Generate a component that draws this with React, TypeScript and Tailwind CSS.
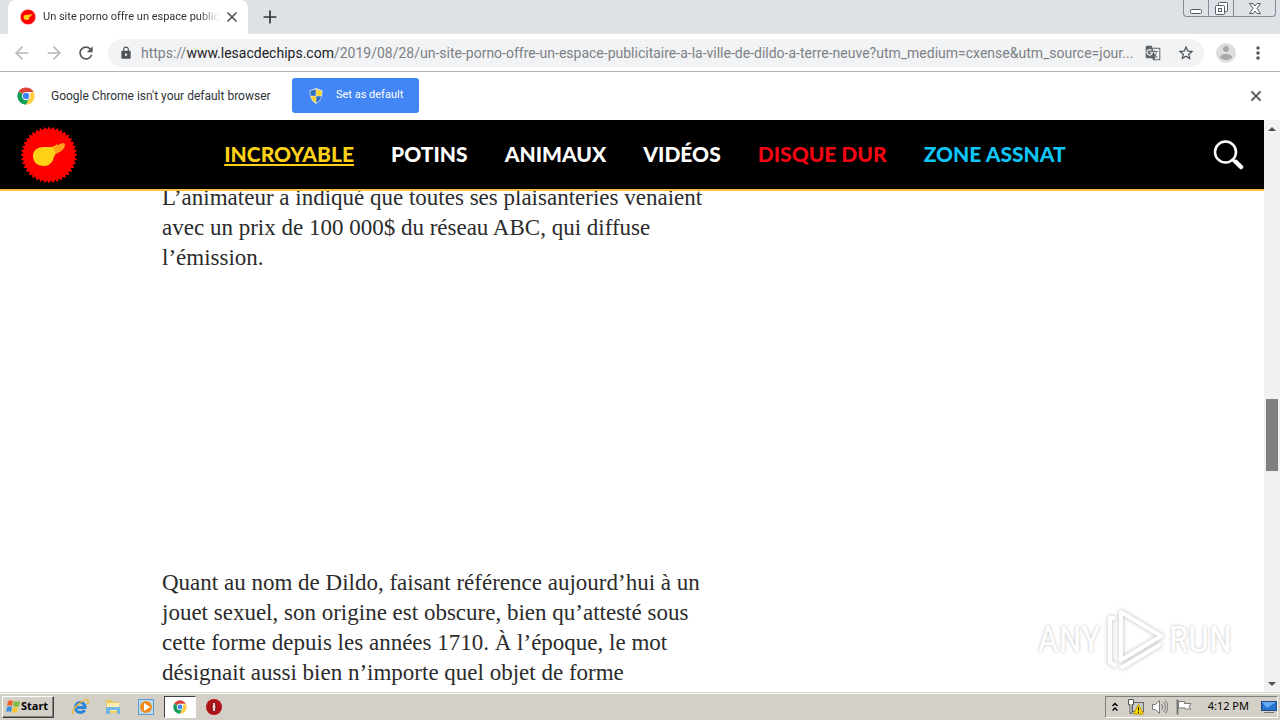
import { ArrowLeft, ArrowRight, Plus, X } from 'lucide-react';
import { MdGTranslate, MdLock, MdMoreVert, MdRefresh, MdStarBorder } from 'react-icons/md';

const NAV_ITEMS = [
    { label: 'INCROYABLE', className: 'text-[#fdd116] underline decoration-2 underline-offset-2' },
    { label: 'POTINS', className: 'text-white' },
    { label: 'ANIMAUX', className: 'text-white' },
    { label: 'VIDÉOS', className: 'text-white' },
    { label: 'DISQUE DUR', className: 'text-[#f50514]' },
    { label: 'ZONE ASSNAT', className: 'text-[#0fc5f7]' },
];

// serrated edge of the badge, 40 teeth
const BADGE_POINTS = Array.from({ length: 80 }, (_, i) => {
    const r = i % 2 ? 25.5 : 28.5;
    const a = (i * Math.PI) / 40;
    return `${(29 + r * Math.cos(a)).toFixed(1)},${(29 + r * Math.sin(a)).toFixed(1)}`;
}).join(' ');

const ChipLogo = ({ className }: { className: string }) => (
    <svg viewBox="0 0 58 58" className={className} aria-hidden="true">
        <polygon points={BADGE_POINTS} fill="#fe0000" />
        <path d="M13 30c0-6 5-9 11-9 5 0 10 1 13-3l1 8c-4 3-4 5-5 8-2 4-5 6-9 6-7 0-11-4-11-10z" fill="#fdd116" />
        <path d="M33 21c4-1 7-4 11-4 3 3-1 8-8 11-1-2-2-4-3-7z" fill="#ffa11a" />
    </svg>
);

const ChromeLogo = ({ className }: { className: string }) => (
    <svg viewBox="0 0 48 48" className={className} aria-hidden="true">
        <path d="M24 24L4.1 12.5A23 23 0 0 1 43.9 12.5L44 13H24z" fill="#db4437" />
        <path d="M24 24L4.1 12.5A23 23 0 0 0 24 47L33.5 29.5z" fill="#0f9d58" />
        <path d="M24 24L43.9 12.5A23 23 0 0 1 24 47L33.5 29.5z" fill="#ffcd40" />
        <circle cx="24" cy="24" r="11" fill="#fff" />
        <circle cx="24" cy="24" r="8.5" fill="#4285f4" />
    </svg>
);

const ShieldIcon = () => (
    <svg viewBox="0 0 16 16" className="w-4 h-4" aria-hidden="true">
        <path d="M8 0l6.5 2.5c0 6-1.5 10.5-6.5 13.5C3 13 1.5 8.5 1.5 2.5z" fill="#dfe6ee" />
        <path d="M7.7 1.3v6.4h-5c-.3-1.5-.4-3-.4-4.6z" fill="#2a6fc0" />
        <path d="M8.3 1.3l5.4 1.8c0 1.6-.1 3.1-.4 4.6h-5z" fill="#f7d22e" />
        <path d="M7.7 8.3v6.6C4.8 13 3.3 11 2.8 8.3z" fill="#f7d22e" />
        <path d="M8.3 8.3v6.6c2.9-1.9 4.4-3.9 4.9-6.6z" fill="#2a6fc0" />
    </svg>
);

function TabStrip() {
    return (
        <div className="flex h-[34px] shrink-0 bg-[#dee1e6] pl-2">
            <div className="flex w-60 items-center rounded-t-lg bg-white pl-3 pr-2">
                <ChipLogo className="w-4 h-4 shrink-0" />
                <span className="ml-[7px] flex-1 overflow-hidden whitespace-nowrap text-[11px] text-[#303338] [mask-image:linear-gradient(to_right,black_88%,transparent)]">
                    Un site porno offre un espace publici
                </span>
                <button aria-label="Close tab" className="ml-1 text-[#505357]"><X className="w-4 h-4" strokeWidth={2.5} /></button>
            </div>
            <button aria-label="New tab" className="ml-3 text-[#303338]"><Plus className="w-5 h-5" /></button>
            <div className="ml-auto mr-1 flex h-[17px] overflow-hidden rounded-b border border-t-0 border-[#858b96] text-[#555b66]">
                <button aria-label="Minimize" className="flex w-[25px] items-end justify-center border-r border-[#858b96] pb-0.5">
                    <svg viewBox="0 0 12 5" className="w-3 h-[5px]"><rect x=".5" y=".5" width="11" height="4" rx="1" fill="#fff" stroke="currentColor" /></svg>
                </button>
                <button aria-label="Restore" className="flex w-[25px] items-center justify-center border-r border-[#858b96]">
                    <svg viewBox="0 0 13 13" className="w-[13px] h-[13px]" fill="#fff" stroke="currentColor">
                        <rect x="3.5" y=".5" width="9" height="9" rx="1" />
                        <rect x=".5" y="3.5" width="9" height="9" rx="1" />
                        <rect x="3.5" y="6.5" width="3" height="3" />
                    </svg>
                </button>
                <button aria-label="Close" className="flex w-[41px] items-center justify-center">
                    <svg viewBox="0 0 12 11" className="w-3 h-[11px]" fill="#fff" stroke="currentColor">
                        <path d="M.5.5H4L6 3l2-2.5h3.5L8 5.500l3.500 5H8L6 8l-2 2.500H.5L4 5.500z" />
                    </svg>
                </button>
            </div>
        </div>
    );
}

function Toolbar() {
    return (
        <div className="flex h-[38px] shrink-0 items-center border-b border-[#b1b3b1] bg-white px-3">
            <button aria-label="Back" className="text-[#b5b7ba]"><ArrowLeft className="w-5 h-5" /></button>
            <button aria-label="Forward" className="ml-3 text-[#b5b7ba]"><ArrowRight className="w-5 h-5" /></button>
            <button aria-label="Reload" className="ml-3 text-[#54575b]"><MdRefresh className="w-5 h-5" /></button>
            <div className="ml-3 flex h-7 min-w-0 flex-1 items-center rounded-full bg-[#f1f3f4] pl-[11px] pr-[9px] text-sm text-[#7d8186]">
                <MdLock className="w-[14px] h-[14px] shrink-0 text-[#505357]" />
                <label htmlFor="address" className="ml-2 whitespace-nowrap">
                    https://<span className="text-[#202124]">www.lesacdechips.com</span>
                </label>
                <input
                    id="address"
                    type="text"
                    className="min-w-0 flex-1 bg-transparent text-ellipsis outline-none"
                    defaultValue="/2019/08/28/un-site-porno-offre-un-espace-publicitaire-a-la-ville-de-dildo-a-terre-neuve?utm_medium=cxense&utm_source=jour..."
                />
                <button aria-label="Translate this page" className="ml-2 text-[#5f6368]"><MdGTranslate className="w-4 h-4" /></button>
                <button aria-label="Bookmark this page" className="ml-4 text-[#4a4d51]"><MdStarBorder className="w-[18px] h-[18px]" /></button>
            </div>
            <button aria-label="Profile" className="ml-3">
                <svg viewBox="0 0 20 20" className="w-5 h-5">
                    <circle cx="10" cy="10" r="10" fill="#dedede" />
                    <circle cx="10" cy="6" r="3" fill="#a9a9a9" />
                    <ellipse cx="10" cy="14" rx="6" ry="3" fill="#a9a9a9" />
                </svg>
            </button>
            <button aria-label="Menu" className="ml-3 text-[#505357]"><MdMoreVert className="w-5 h-5" /></button>
        </div>
    );
}

function DefaultBrowserBar() {
    return (
        <div className="flex h-12 shrink-0 items-center bg-white pb-px pl-[17px] pr-4 text-xs text-[#303338]">
            <ChromeLogo className="w-[18px] h-[18px]" />
            <span className="ml-4 w-[229px] whitespace-nowrap">Google Chrome isn't your default browser</span>
            <button className="ml-3 flex h-[35px] w-[127px] items-center gap-3 rounded-[3px] bg-[#4285f4] pl-4 text-[11px] whitespace-nowrap text-white">
                <ShieldIcon />
                Set as default
            </button>
            <button aria-label="Dismiss" className="ml-auto text-[#5f6368]"><X className="w-4 h-4" strokeWidth={3} /></button>
        </div>
    );
}

function SiteHeader() {
    return (
        <header className="flex h-[71px] shrink-0 items-center border-b-2 border-[#f9bf3b] bg-black px-5">
            <a href="#" aria-label="Accueil"><ChipLogo className="w-[58px] h-[58px]" /></a>
            <nav className="flex flex-1 justify-center gap-[37px] pb-0.5 font-['Lato',sans-serif] text-[21px] font-black whitespace-nowrap">
                {NAV_ITEMS.map(item => <a key={item.label} href="#" className={item.className}>{item.label}</a>)}
            </nav>
            <button aria-label="Rechercher" className="text-white">
                <svg viewBox="0 0 32 32" className="w-8 h-8" fill="none" stroke="currentColor">
                    <circle cx="13.5" cy="13" r="10.5" strokeWidth="2.5" />
                    <path d="M21 21l3 3" strokeWidth="3" />
                    <path d="M24 23l5 5" strokeWidth="4.5" strokeLinecap="round" />
                </svg>
            </button>
        </header>
    );
}

function Article() {
    return (
        <article className="-mt-2 ml-[162px] w-[560px] font-['Liberation_Serif',serif] text-[23px] leading-[30px] whitespace-nowrap text-[#2b2b2b]">
            <p>
                L’animateur a indiqué que toutes ses plaisanteries venaient<br />
                avec un prix de 100 000$ du réseau ABC, qui diffuse<br />
                l’émission.
            </p>
            <p className="mt-[295px]">
                Quant au nom de Dildo, faisant référence aujourd’hui à un<br />
                jouet sexuel, son origine est obscure, bien qu’attesté sous<br />
                cette forme depuis les années 1710. À l’époque, le mot<br />
                désignait aussi bien n’importe quel objet de forme
            </p>
        </article>
    );
}

function Scrollbar() {
    return (
        <div className="flex w-4 shrink-0 flex-col items-center bg-[#f1f1f1]">
            <button aria-label="Scroll up" className="flex h-[17px] items-center">
                <svg viewBox="0 0 8 4" className="w-2 h-1"><path d="M0 4l4-4 4 4z" fill="#505050" /></svg>
            </button>
            <div className="flex-[262]" />
            <div className="h-[72px] w-3 bg-[#7f7f7f]" />
            <div className="flex-[204]" />
            <button aria-label="Scroll down" className="flex h-[17px] items-center">
                <svg viewBox="0 0 8 4" className="w-2 h-1"><path d="M0 0h8L4 4z" fill="#505050" /></svg>
            </button>
        </div>
    );
}

function Watermark() {
    return (
        <div className="absolute right-8 bottom-5 flex items-center gap-1 font-['Roboto_Condensed','Roboto',sans-serif] text-[37px] leading-[64px] text-white [text-shadow:0_0_3px_#b8b8b8]">
            <span>ANY</span>
            <svg viewBox="0 0 60 64" className="w-[60px] h-16 drop-shadow-[0_0_2px_#b8b8b8]" fill="none" stroke="#fff" strokeWidth="4" strokeLinejoin="round">
                <path d="M16 4l40 24-40 24z" />
                <path d="M10 10H5v44l6 4" />
                <path d="M16 60l40-24" />
            </svg>
            <span>RUN</span>
        </div>
    );
}

function Taskbar() {
    return (
        <footer className="flex h-7 shrink-0 items-center border-t border-[#d4d0c8] bg-[#d4d0c8] pl-0.5 font-['Noto_Sans',sans-serif] text-[11px] text-black shadow-[inset_0_1px_0_#fff]">
            <button className="flex h-[22px] w-[52px] items-center border border-t-white border-l-white border-r-[#404040] border-b-[#404040] pl-0.5 font-bold shadow-[inset_-1px_-1px_0_#808080]">
                <svg viewBox="0 0 16 16" className="w-4 h-4 shrink-0" aria-hidden="true">
                    <path d="M3 2c2-1 3-1 5 0L7 7C5 6 4 6 2 7z" fill="#f0622d" />
                    <path d="M9 2c2 1 3 1 6 0l-1 5c-2 1-4 1-6 0z" fill="#7cba3b" />
                    <path d="M2 8c2-1 3-1 5 0l-1 5c-2-1-3-1-5 0z" fill="#3a8ee0" />
                    <path d="M8 8c2 1 3 1 5 0l-1 5c-2 1-3 1-5 0z" fill="#fcc52e" />
                </svg>
                Start
            </button>
            <div className="ml-[11px] flex items-center gap-[3px]">
                <button aria-label="Internet Explorer" className="flex w-[30px] justify-center">
                    <svg viewBox="0 0 18 18" className="w-[18px] h-[18px]" fill="none">
                        <path d="M4.5 9.5H14c0-7-9.5-6.500-9.5 0 0 6 7.500 6 9 2.500" stroke="#2a86d8" strokeWidth="3" />
                        <path d="M2 16C-1 12 14-1 17 2c1 1 0 3-1 4" stroke="#e9b53a" strokeWidth="1.5" />
                    </svg>
                </button>
                <button aria-label="Explorer" className="flex w-[30px] justify-center">
                    <svg viewBox="0 0 18 18" className="w-[18px] h-[18px]">
                        <path d="M2 2h6l1 2h6v11H2z" fill="#e9c95f" />
                        <path d="M3 5h12v8H3z" fill="#fbeeb0" />
                        <path d="M2 9h14v7h-3v-4H6v4H2z" fill="#72b7e3" />
                    </svg>
                </button>
                <button aria-label="Media Player" className="flex w-[30px] justify-center">
                    <svg viewBox="0 0 18 18" className="w-[18px] h-[18px]">
                        <rect x="1.5" y="1.5" width="15" height="15" fill="#b9dcf5" stroke="#5b9bd0" />
                        <circle cx="9" cy="9" r="6" fill="#f08a1d" />
                        <path d="M7 5l6 4-6 4z" fill="#fff" />
                    </svg>
                </button>
                <button aria-label="Google Chrome" className="flex h-[22px] w-8 items-center justify-center border border-t-[#404040] border-l-[#404040] border-r-white border-b-white bg-white">
                    <ChromeLogo className="w-[14px] h-[14px]" />
                </button>
                <button aria-label="Opera" className="flex w-[30px] justify-center">
                    <svg viewBox="0 0 18 18" className="w-[18px] h-[18px]">
                        <circle cx="9" cy="9" r="8" fill="#b01218" />
                        <ellipse cx="9" cy="9" rx="2" ry="5" fill="#f3d3d3" stroke="#6b0508" />
                    </svg>
                </button>
            </div>
            <div className="ml-auto mr-0.5 flex h-[22px] items-center border border-t-[#808080] border-l-[#808080] border-r-white border-b-white pl-1">
                <button aria-label="Show hidden icons" className="px-0.5">
                    <svg viewBox="0 0 6 10" className="w-1.5 h-2.5" fill="none" stroke="#000" strokeWidth="1.5"><path d="M.5 4L3 1.500 5.500 4M.5 8.500L3 6l2.500 2.500" /></svg>
                </button>
                <svg viewBox="0 0 16 16" className="ml-2 w-4 h-4" aria-hidden="true">
                    <rect x="4.5" y="3.5" width="11" height="9" fill="#c9cdc5" stroke="#666" />
                    <path d="M.5.5h5v5H4v9H2v-9H.5z" fill="#fff" stroke="#555" />
                    <path d="M10.5 5.500l5 9.500h-10z" fill="#ffdf00" stroke="#b89000" />
                    <path d="M10.5 8.500v3M10.5 12.500V14" stroke="#000" />
                </svg>
                <svg viewBox="0 0 16 16" className="ml-2 w-4 h-4" fill="none" stroke="#777" aria-hidden="true">
                    <path d="M.5 5.500h3l4-4v13l-4-4h-3z" fill="#fff" />
                    <path d="M9.5 5c1.500 2 1.500 4 0 6M11.5 3c2.500 3 2.500 7 0 10M13.5 1.500c3 4 3 9 0 13" />
                </svg>
                <svg viewBox="0 0 16 16" className="ml-2 w-4 h-4" fill="#fff" stroke="#777" aria-hidden="true">
                    <path d="M1.5.5v15" strokeWidth="2" />
                    <path d="M2.5 2.500h6v2H15l-2 3 2 2.500H9V9H2.500z" />
                </svg>
                <span className="ml-4 whitespace-nowrap">4:12 PM</span>
                <svg viewBox="0 0 16 14" className="ml-3 w-4 h-3.5" aria-hidden="true">
                    <rect x=".5" y="1.5" width="15" height="9" fill="#2873cf" stroke="#204a86" />
                    <path d="M1 2h14L6 8z" fill="#65a9ee" />
                    <path d="M3 12.500h10" stroke="#777" />
                </svg>
            </div>
        </footer>
    );
}

export default function App() {
    return (
        <div className="flex h-screen flex-col overflow-hidden bg-white font-['Roboto',sans-serif]">
            <TabStrip />
            <Toolbar />
            <DefaultBrowserBar />
            <div className="flex min-h-0 flex-1">
                <div className="relative flex min-w-0 flex-1 flex-col">
                    <SiteHeader />
                    <main className="min-h-0 flex-1 overflow-hidden">
                        <Article />
                    </main>
                    <Watermark />
                </div>
                <Scrollbar />
            </div>
            <Taskbar />
        </div>
    );
}
